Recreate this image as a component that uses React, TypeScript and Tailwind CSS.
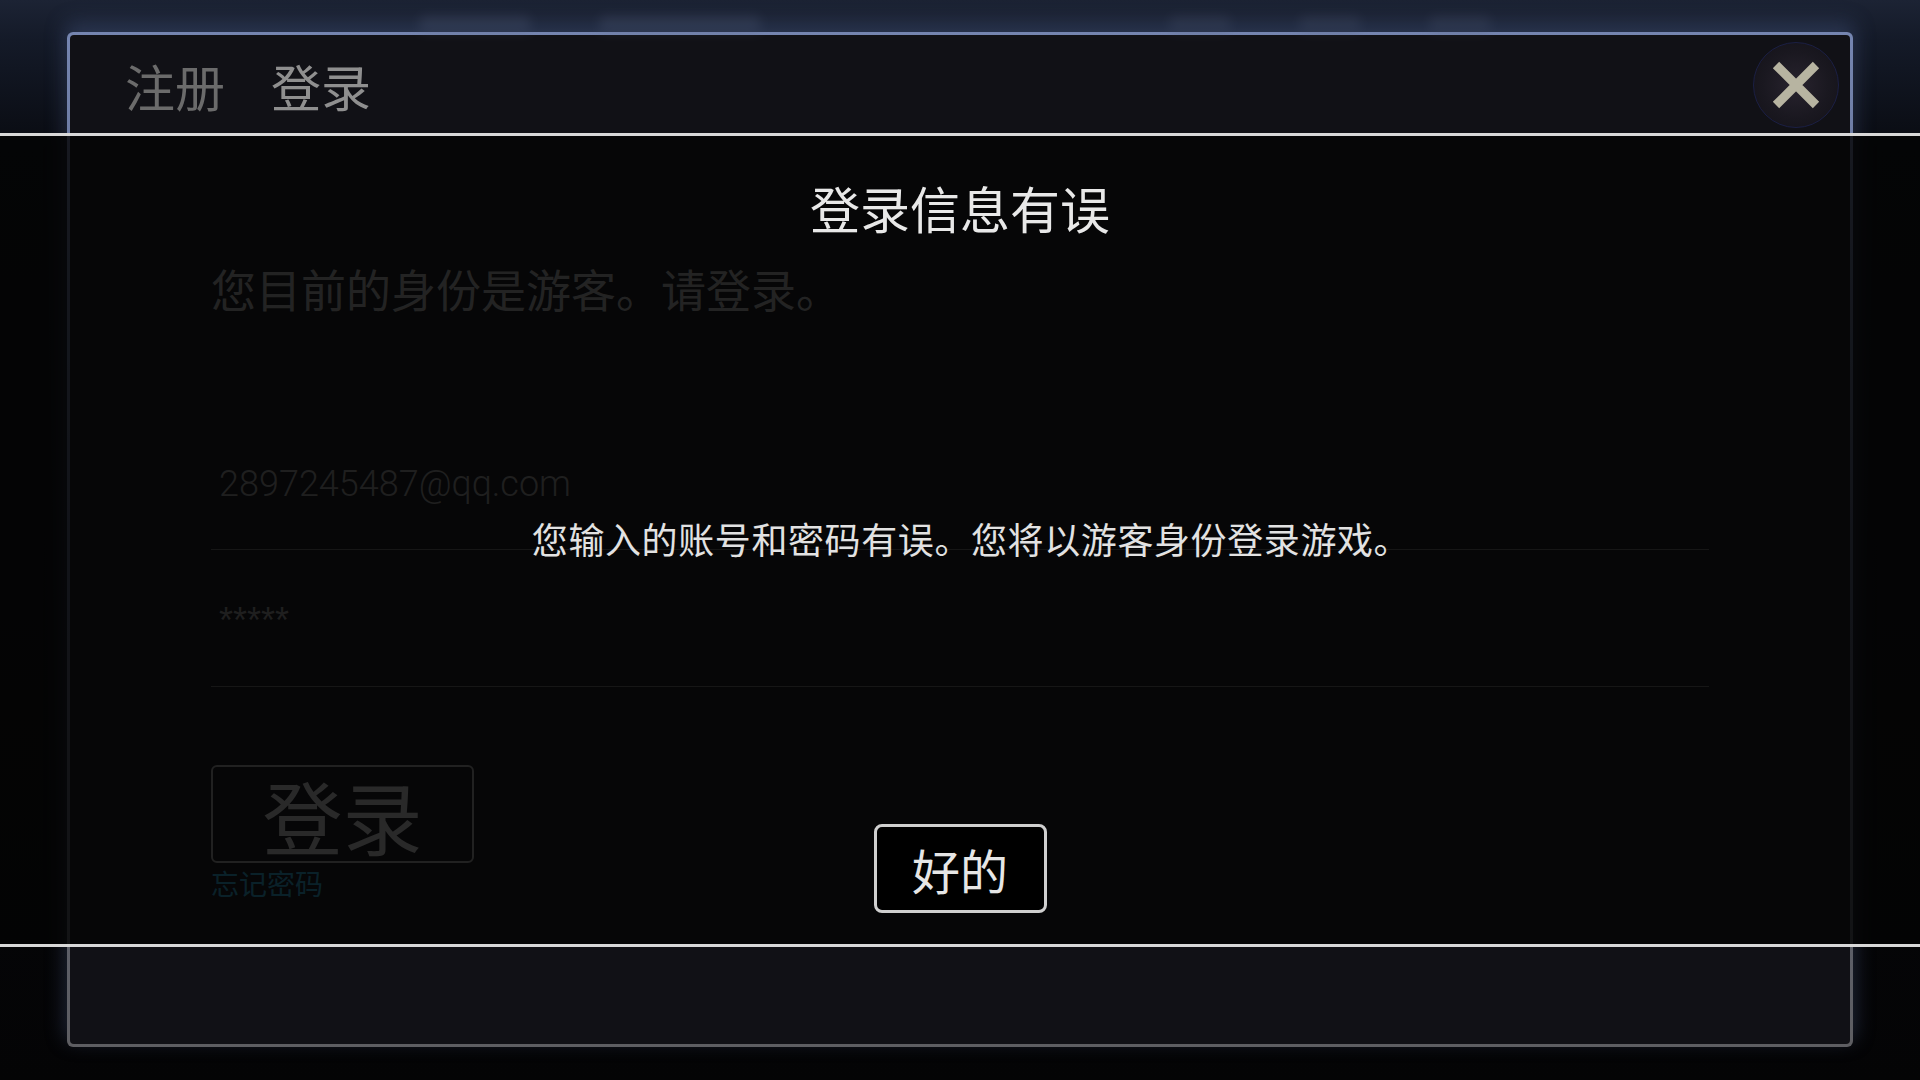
const cjk = "font-['Noto_Sans_CJK_SC','Noto_Sans',sans-serif]";

const CloseIcon = () => (
  <svg width="48" height="48" viewBox="0 0 48 48" className="relative">
    <path d="M4 4 L44 44 M44 4 L4 44" stroke="#b7b4a1" strokeWidth="9" strokeLinecap="butt" />
  </svg>
);

// login form that sits behind the error dialog
const LoginPanel = () => (
  <div className="mx-[67px] h-[1015px] rounded-[6px] bg-gradient-to-b from-[#7585b0] via-[#56607c] to-[#5e5e62] p-[3px] shadow-[0_-8px_20px_2px_rgba(80,100,150,0.35)]">
    <div className="flex h-full flex-col rounded-[4px] bg-[#111116]">
      {/* tabs + close */}
      <div className="flex h-[100px] items-center justify-between pl-[55px] pr-[30px]">
        <div className={`flex gap-[46px] text-[50px] leading-none ${cjk}`}>
          <span className="text-[#6b6b6b]">注册</span>
          <span className="text-[#8f8f8f]">登录</span>
        </div>
        <div className="relative flex h-[48px] w-[48px] items-center justify-center">
          <div className="absolute left-1/2 top-1/2 h-[86px] w-[86px] -translate-x-1/2 -translate-y-1/2 rounded-full border border-[#1b1f44] bg-[radial-gradient(circle,#28232e_0%,#1a1820_55%,#121117_100%)]" />
          <CloseIcon />
        </div>
      </div>

      <div className={`flex flex-col px-[141px] ${cjk}`}>
        <p className="mt-[131px] text-[45px] leading-none text-[#b0b0b0]">您目前的身份是游客。请登录。</p>

        <div className="mt-[155px] border-b border-[#6a6a6a] pb-[47px] pl-[8px]">
          <span className="font-['Roboto',sans-serif] text-[36px] font-light leading-none text-[#9a9a9a]">2897245487@qq.com</span>
        </div>
        <div className="border-b border-[#6a6a6a] pt-[53px] pb-[47px] pl-[8px]">
          <span className="font-['Liberation_Sans',sans-serif] text-[36px] leading-none text-[#9a9a9a]">*****</span>
        </div>

        <button className="mt-[78px] flex h-[98px] w-[263px] items-center justify-center rounded-[6px] border-2 border-[#a4a4a4] text-[80px] leading-none text-[#d0d0d0]">
          登录
        </button>
        <span className="mt-[6px] text-[28px] leading-none text-[#2ba4d0]">忘记密码</span>
      </div>
    </div>
  </div>
);

const ErrorDialog = () => (
  <div className={`absolute left-0 right-0 top-[133px] flex h-[814px] flex-col items-center border-y-[3px] border-[#d8d8d8] bg-[rgba(4,4,4,0.82)] ${cjk}`}>
    <h1 className="mt-[46px] text-[50px] font-normal leading-none text-[#e8e8e8]">登录信息有误</h1>
    <p className="mt-[288px] pl-[22px] text-[36px] leading-none tracking-[0.6px] text-[#e2e2e2]">您输入的账号和密码有误。您将以游客身份登录游戏。</p>
    <button className="mt-[268px] flex h-[89px] w-[173px] items-center justify-center rounded-[8px] border-[3px] border-[#cfcfcf] bg-black text-[48px] leading-none text-[#e6e6e6]">
      好的
    </button>
  </div>
);

export default function App() {
  return (
    <div className="relative h-[1080px] w-[1920px] overflow-hidden bg-[linear-gradient(180deg,#1c2334_0px,#141a28_40px,#090b11_150px,#040405_100%)]">
      {/* blurred scene behind the panel */}
      <div className="flex h-[32px] gap-[70px] overflow-hidden pl-[420px] pt-[16px] opacity-25 blur-[6px]">
        <div className="h-[24px] w-[110px] rounded bg-[#55607c]" />
        <div className="h-[24px] w-[160px] rounded bg-[#55607c]" />
        <div className="ml-[340px] h-[24px] w-[60px] rounded bg-[#4a536c]" />
        <div className="h-[24px] w-[60px] rounded bg-[#4a536c]" />
        <div className="h-[24px] w-[60px] rounded bg-[#4a536c]" />
      </div>
      <LoginPanel />
      <ErrorDialog />
    </div>
  );
}
